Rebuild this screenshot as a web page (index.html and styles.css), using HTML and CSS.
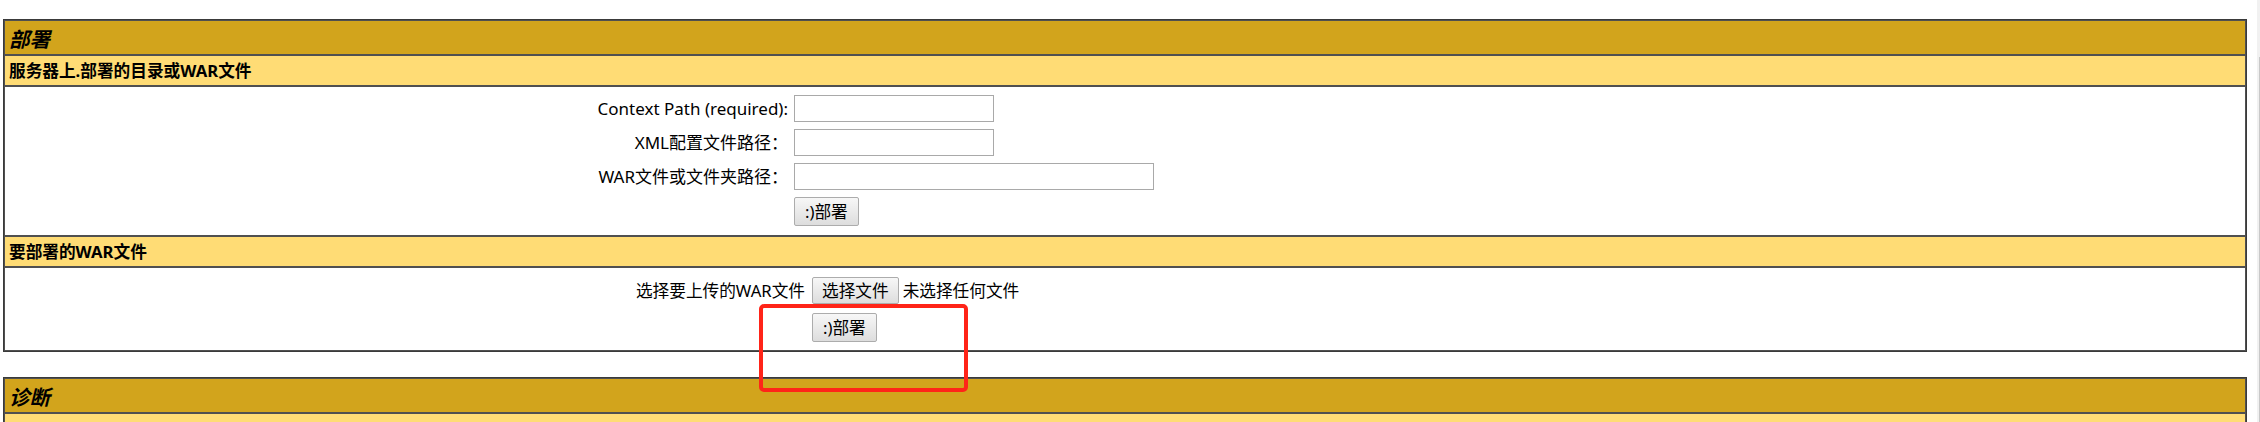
FILE: index.html
```html
<!DOCTYPE html>
<html lang="zh-CN">
<head>
<meta charset="utf-8">
<title>部署</title>
<link rel="stylesheet" href="styles.css">
</head>
<body>
<div class="panel">
  <div class="cell title">部署</div>
  <div class="cell header">服务器上.部署的目录或WAR文件</div>
  <div class="cell body server-body">
    <div class="form-grid server">
      <label class="lbl">Context Path (required):</label>
      <div class="fld"><input class="txt short" type="text"></div>
      <label class="lbl">XML配置文件路径<span class="fw">：</span></label>
      <div class="fld"><input class="txt short" type="text"></div>
      <label class="lbl">WAR文件或文件夹路径<span class="fw">：</span></label>
      <div class="fld"><input class="txt long" type="text"></div>
      <div class="lbl"></div>
      <div class="fld"><button class="btn deploy" type="button">:)部署</button></div>
    </div>
  </div>
  <div class="cell header">要部署的WAR文件</div>
  <div class="cell body upload-body">
    <div class="form-grid upload">
      <label class="lbl">选择要上传的WAR文件</label>
      <div class="fld file">
        <button class="btn choose" type="button">选择文件</button>
        <span class="nofile">未选择任何文件</span>
      </div>
      <div class="lbl"></div>
      <div class="fld"><button class="btn deploy" type="button">:)部署</button></div>
    </div>
  </div>
</div>
<div class="panel second">
  <div class="cell title">诊断</div>
  <div class="cell header"></div>
</div>
<div class="annot"></div>
<div class="scrollbar"><div class="thumb"></div></div>
</body>
</html>
```
FILE: styles.css
```css
html, body {
  margin: 0;
  padding: 0;
  background: #ffffff;
  overflow: hidden;
}
body {
  font-family: "Noto Sans", "Noto Sans CJK SC", sans-serif;
  color: #000;
}
.panel {
  margin: 19px 13px 0 3px;
  border: 1px solid #3a3a3a;
  display: flex;
  flex-direction: column;
}
.panel.second {
  margin-top: 25px;
}
.cell {
  border: 1px solid #505050;
}
.title {
  background: #D2A41C;
  font-size: 20.5px;
  font-weight: bold;
  font-style: italic;
  line-height: 27px;
  padding: 5px 4px 1px;
}
.header {
  background: #FFDC75;
  font-size: 16.67px;
  font-weight: bold;
  line-height: 23px;
  padding: 3px 4px;
  min-height: 29px;
  box-sizing: border-box;
}
.body {
  background: #fff;
}
.form-grid {
  display: grid;
  align-items: center;
}
.server {
  grid-template-columns: 786fr 1454fr;
  row-gap: 7px;
  padding: 8px 0 9px;
}
.upload {
  grid-template-columns: 803fr 1437fr;
  row-gap: 9px;
  padding: 9px 0 8px;
}
.lbl {
  text-align: right;
  padding-right: 3px;
  font-size: 16.67px;
  line-height: 22px;
}
.server .lbl {
  font-size: 17px;
}
.fw {
  font-family: "Noto Sans CJK TC", "Noto Sans CJK SC", sans-serif;
}
.server .fld {
  padding-left: 3px;
  display: flex;
}
.upload .fld {
  padding-left: 4px;
  display: flex;
  align-items: center;
}
.txt {
  height: 27px;
  box-sizing: border-box;
  border: 1px solid #a9a9a9;
  margin: 0;
  padding: 0 3px;
  background: #fff;
  font-size: 16.67px;
}
.txt.short { width: 200px; }
.txt.long { width: 360px; }
.btn {
  margin: 0;
  box-sizing: border-box;
  border: 1px solid #acacac;
  border-radius: 2px;
  background: linear-gradient(#f7f7f7, #dddddd);
  font-family: "Noto Sans", "Noto Sans CJK SC", sans-serif;
  font-size: 16.67px;
  color: #000;
  line-height: 20px;
}
.btn.deploy { height: 29px; padding: 0 10px; }
.btn.choose { height: 27px; padding: 0 9px; margin-right: 4px; }
.nofile {
  font-size: 16.67px;
  line-height: 22px;
}
.annot {
  position: absolute;
  left: 759px;
  top: 304px;
  width: 209px;
  height: 88px;
  box-sizing: border-box;
  border: 4px solid #ff2418;
  border-radius: 5px;
}
.scrollbar {
  position: fixed;
  top: 0;
  right: 0;
  width: 3px;
  height: 100%;
  background: #f1f1f1;
}
.thumb {
  margin-top: 57px;
  margin-left: 2px;
  width: 1px;
  height: 100%;
  background: #c8c8c8;
}
```
